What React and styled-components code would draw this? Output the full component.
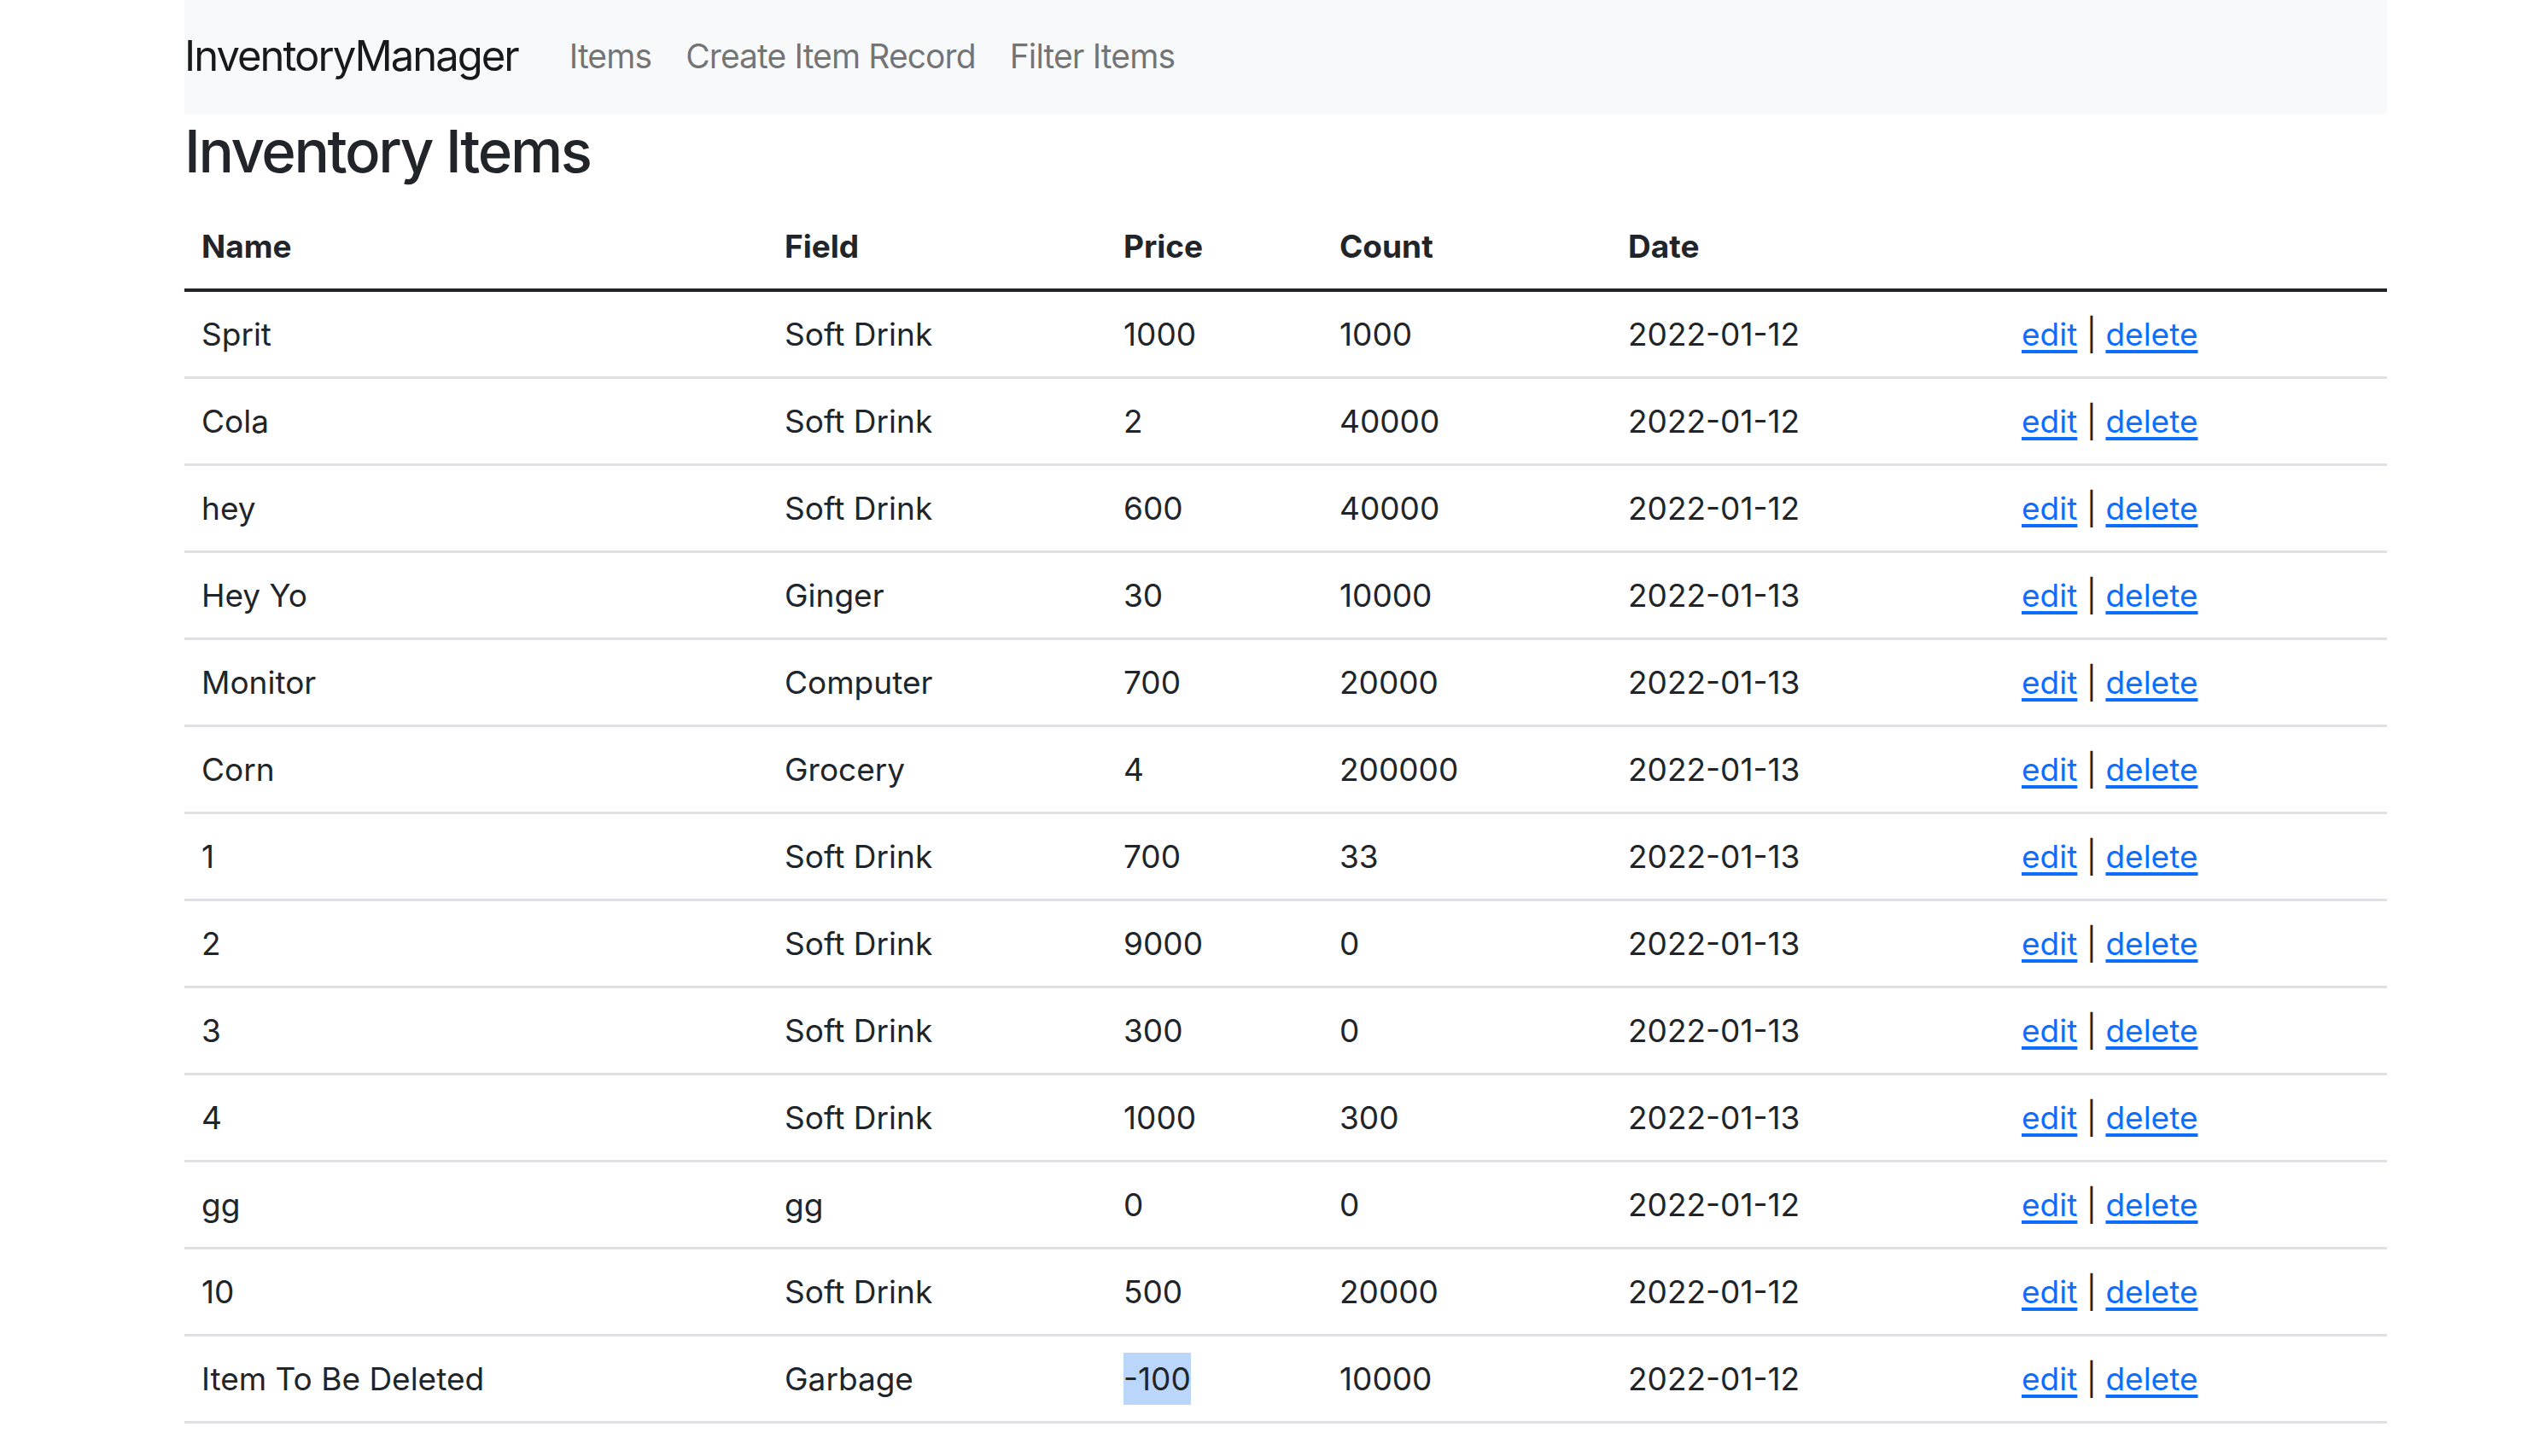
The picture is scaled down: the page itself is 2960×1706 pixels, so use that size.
import React from 'react'
import styled, { createGlobalStyle } from 'styled-components';

const GlobalStyle = createGlobalStyle`
body {
  margin: 0;
  background: #fff;
  font-family: Inter, "Liberation Sans", sans-serif;
  color: #212529;
}
`;
const Page = styled.div`
  margin-left: 216px;
  width: 2580px;
`;
const Navbar = styled.nav`
  display: flex;
  align-items: center;
  height: 134px;
  padding-bottom: 4px;
  box-sizing: border-box;
  background: #f8f9fa;
`;
const Brand = styled.a`
  font-size: 49px;
  color: rgba(0, 0, 0, 0.9);
  text-decoration: none;
  margin-right: 40px;
  letter-spacing: -2px;
`;
const NavLink = styled.a`
  font-size: 39px;
  color: rgba(0, 0, 0, 0.55);
  text-decoration: none;
  padding: 0 20px;
  letter-spacing: -0.9px;
`;
const Title = styled.h2`
  font-size: 69px;
  font-weight: 500;
  line-height: 86px;
  margin: 0 0 20px;
  letter-spacing: -2.4px;
`;
const Table = styled.table`
  width: 100%;
  table-layout: fixed;
  border-collapse: separate;
  border-spacing: 0;
  font-size: 37px;
`;
const Th = styled.th`
  width: ${p => p.w ? p.w - 40 + 'px' : 'auto'};
  text-align: left;
  font-weight: 700;
  padding: 0 20px;
  line-height: 98px;
  border-bottom: 4px solid #212529;
`;
const Td = styled.td`
  padding: 0 20px;
  line-height: 99px;
  border-bottom: 3px solid #dee2e6;
  white-space: nowrap;
`;
const Link = styled.a`
  color: #0d6efd;
  text-decoration: underline;
  text-decoration-thickness: 4px;
  text-underline-offset: 5px;
`;
const Selected = styled.span`
  background: #bad6fb;
  padding: 8px 0;
`;

const items = [
  ['Sprit', 'Soft Drink', '1000', '1000', '2022-01-12'],
  ['Cola', 'Soft Drink', '2', '40000', '2022-01-12'],
  ['hey', 'Soft Drink', '600', '40000', '2022-01-12'],
  ['Hey Yo', 'Ginger', '30', '10000', '2022-01-13'],
  ['Monitor', 'Computer', '700', '20000', '2022-01-13'],
  ['Corn', 'Grocery', '4', '200000', '2022-01-13'],
  ['1', 'Soft Drink', '700', '33', '2022-01-13'],
  ['2', 'Soft Drink', '9000', '0', '2022-01-13'],
  ['3', 'Soft Drink', '300', '0', '2022-01-13'],
  ['4', 'Soft Drink', '1000', '300', '2022-01-13'],
  ['gg', 'gg', '0', '0', '2022-01-12'],
  ['10', 'Soft Drink', '500', '20000', '2022-01-12'],
  ['Item To Be Deleted', 'Garbage', '-100', '10000', '2022-01-12'],
];

const App = () => {
  return (
    <Page>
      <GlobalStyle />
      <Navbar>
        <Brand href="#">InventoryManager</Brand>
        <NavLink href="#">Items</NavLink>
        <NavLink href="#">Create Item Record</NavLink>
        <NavLink href="#">Filter Items</NavLink>
      </Navbar>
      <Title>Inventory Items</Title>
      <Table>
        <thead>
          <tr>
            <Th w={683}>Name</Th>
            <Th w={397}>Field</Th>
            <Th w={253}>Price</Th>
            <Th w={338}>Count</Th>
            <Th w={461}>Date</Th>
            <Th></Th>
          </tr>
        </thead>
        <tbody>
          {items.map((item, i) => (
            <tr key={i}>
              <Td>{item[0]}</Td>
              <Td>{item[1]}</Td>
              <Td>{item[0] === 'Item To Be Deleted' ? <Selected>{item[2]}</Selected> : item[2]}</Td>
              <Td>{item[3]}</Td>
              <Td>{item[4]}</Td>
              <Td><Link href="#">edit</Link> | <Link href="#">delete</Link></Td>
            </tr>
          ))}
        </tbody>
      </Table>
    </Page>
  )
}

export default App;
